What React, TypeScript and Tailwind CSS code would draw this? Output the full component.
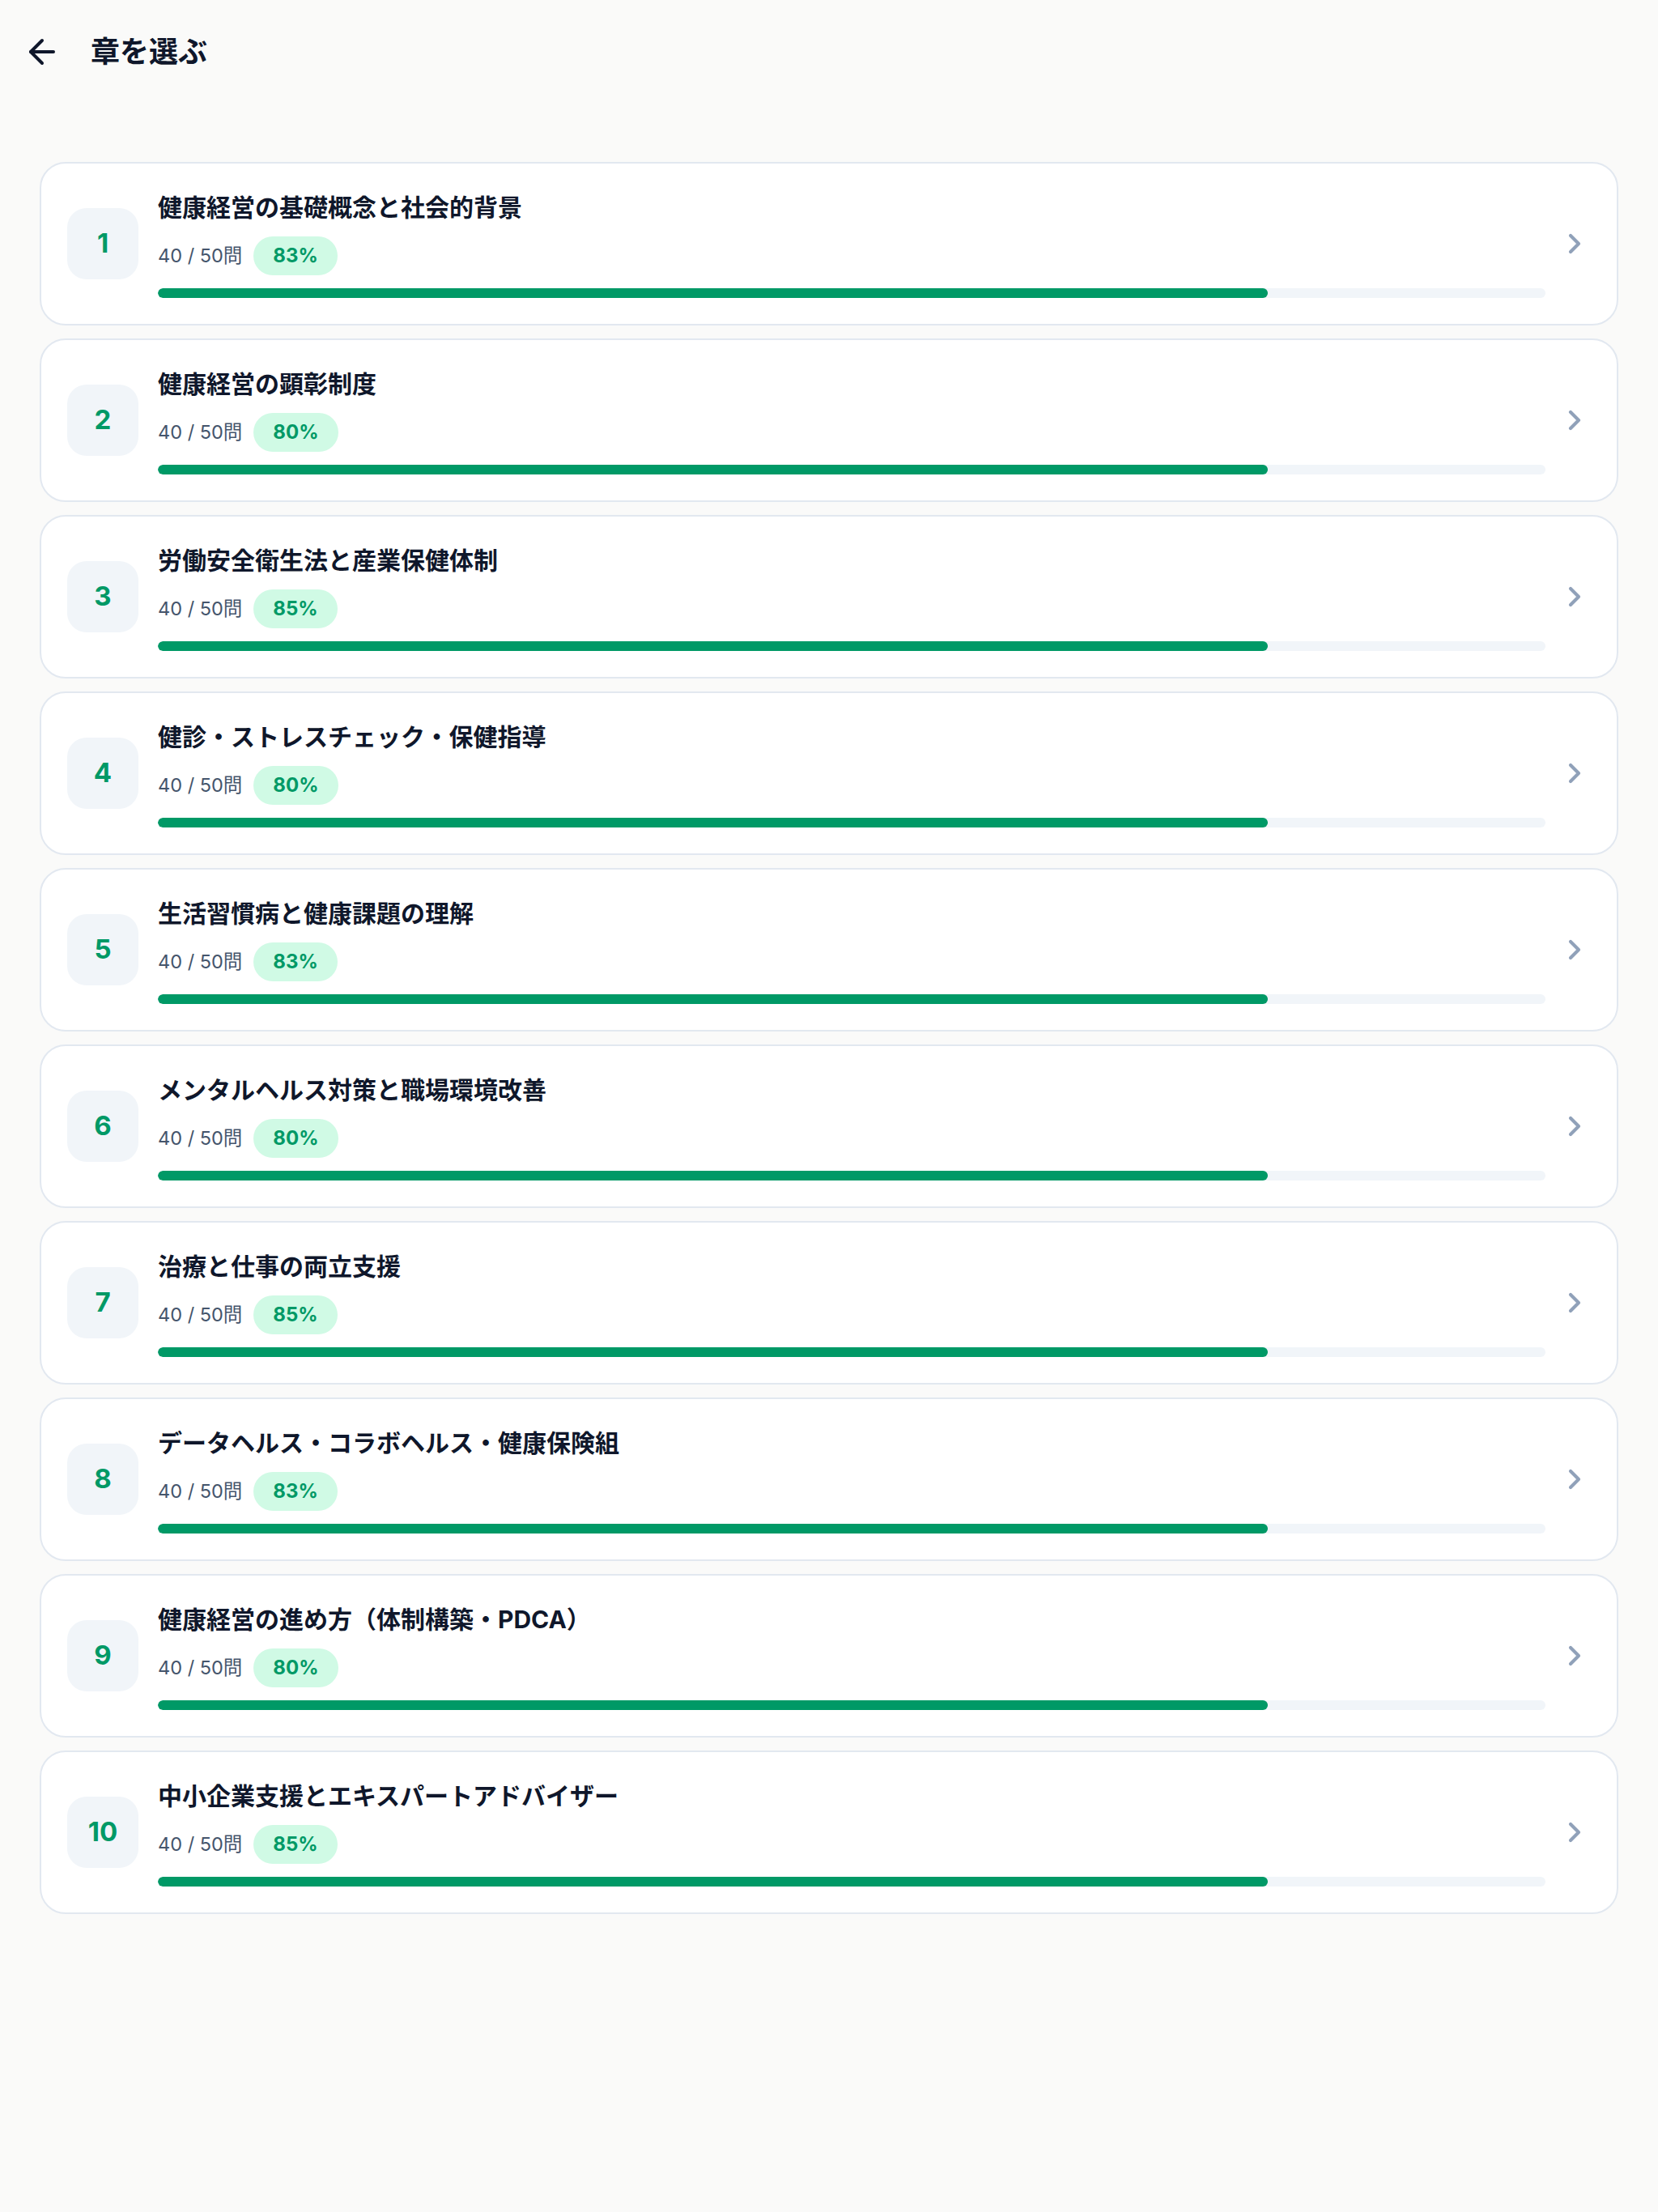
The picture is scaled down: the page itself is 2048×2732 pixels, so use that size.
import React from 'react';
import { ArrowLeft, ChevronRight } from 'lucide-react';

interface Chapter {
  no: number;
  title: string;
  answered: number;
  total: number;
  rate: number;
}

const chapters: Chapter[] = [
  { no: 1, title: '健康経営の基礎概念と社会的背景', answered: 40, total: 50, rate: 83 },
  { no: 2, title: '健康経営の顕彰制度', answered: 40, total: 50, rate: 80 },
  { no: 3, title: '労働安全衛生法と産業保健体制', answered: 40, total: 50, rate: 85 },
  { no: 4, title: '健診・ストレスチェック・保健指導', answered: 40, total: 50, rate: 80 },
  { no: 5, title: '生活習慣病と健康課題の理解', answered: 40, total: 50, rate: 83 },
  { no: 6, title: 'メンタルヘルス対策と職場環境改善', answered: 40, total: 50, rate: 80 },
  { no: 7, title: '治療と仕事の両立支援', answered: 40, total: 50, rate: 85 },
  { no: 8, title: 'データヘルス・コラボヘルス・健康保険組', answered: 40, total: 50, rate: 83 },
  { no: 9, title: '健康経営の進め方（体制構築・PDCA）', answered: 40, total: 50, rate: 80 },
  { no: 10, title: '中小企業支援とエキスパートアドバイザー', answered: 40, total: 50, rate: 85 },
];

const ChapterCard: React.FC<{ chapter: Chapter }> = ({ chapter }) => {
  const progress = (chapter.answered / chapter.total) * 100;
  return (
    <button
      type="button"
      className="flex h-[202px] w-full items-center gap-[24px] rounded-[32px] border-2 border-slate-200 bg-white px-[32px] text-left"
    >
      <div className="flex h-[88px] w-[88px] shrink-0 items-center justify-center rounded-[24px] bg-slate-100 text-[33px] font-bold text-emerald-600">
        {chapter.no}
      </div>
      <div className="flex min-w-0 flex-1 flex-col pt-[2px]">
        <p className="truncate text-[30px] font-bold leading-[40px] text-slate-900">{chapter.title}</p>
        <div className="mt-[16px] flex h-[48px] items-center gap-[14px]">
          <span className="text-[23.5px] leading-[32px] text-slate-600">
            {chapter.answered} / {chapter.total}問
          </span>
          <span className="rounded-full bg-emerald-100 px-[24px] py-[8px] text-[24px] font-bold leading-[32px] text-emerald-600">
            {chapter.rate}%
          </span>
        </div>
        <div className="mt-[16px] h-[12px] w-full overflow-hidden rounded-full bg-slate-100">
          <div className="h-full rounded-full bg-emerald-600" style={{ width: `${progress}%` }} />
        </div>
      </div>
      <ChevronRight size={40} strokeWidth={2.5} className="ml-[-8px] shrink-0 text-slate-400" />
    </button>
  );
};

export default function App() {
  return (
    <div
      className="min-h-screen bg-stone-50"
      style={{ fontFamily: 'Inter, "Noto Sans CJK JP", sans-serif' }}
    >
      <header className="flex h-[128px] items-center gap-[36px] px-[28px]">
        <button type="button" className="text-slate-900" aria-label="戻る">
          <ArrowLeft size={48} strokeWidth={2} />
        </button>
        <h1 className="text-[36px] font-bold text-slate-900">章を選ぶ</h1>
      </header>

      <main className="flex flex-col gap-[16px] px-[49px] pt-[72px]">
        {chapters.map(chapter => (
          <ChapterCard key={chapter.no} chapter={chapter} />
        ))}
      </main>
    </div>
  );
}
